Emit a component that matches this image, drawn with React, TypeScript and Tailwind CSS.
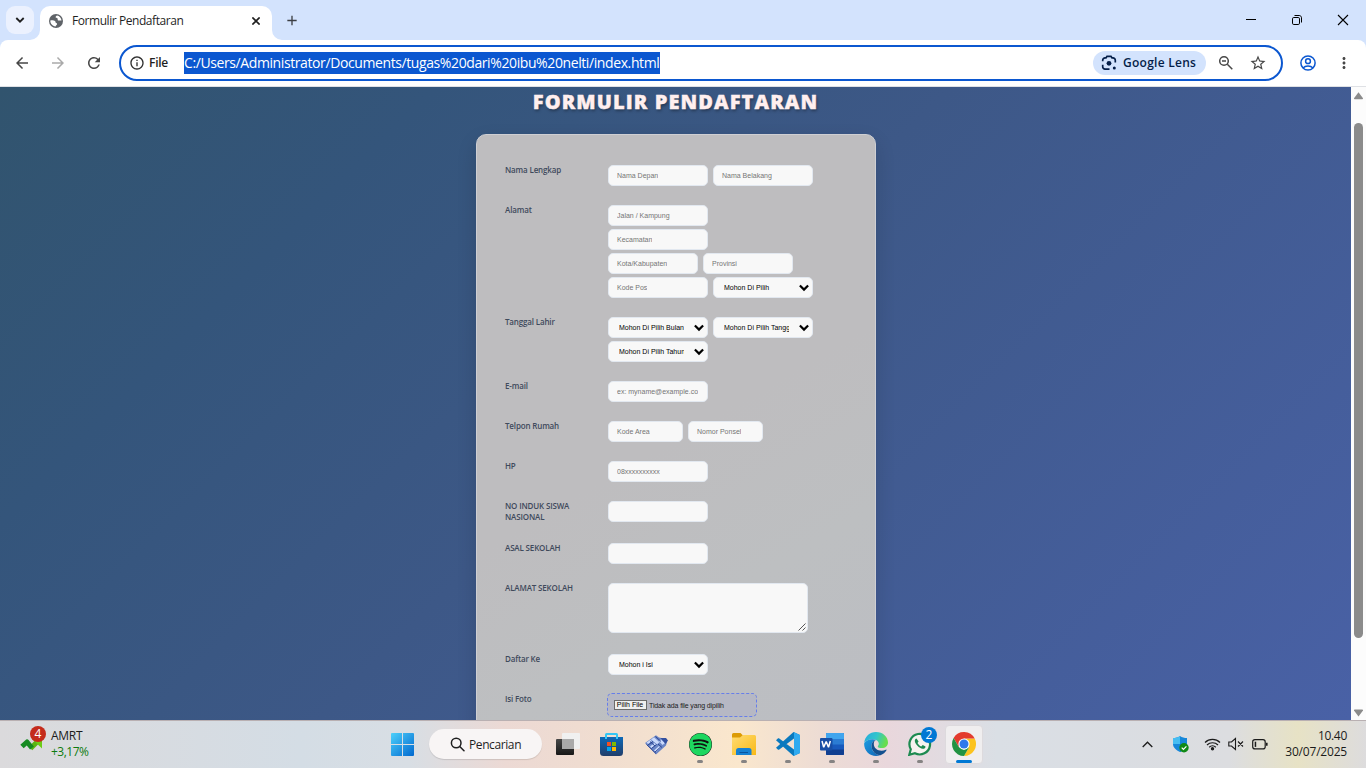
import React from "react";
import {
  MdArrowBack,
  MdArrowForward,
  MdRefresh,
  MdInfoOutline,
  MdStarBorder,
  MdMoreVert,
  MdAdd,
} from "react-icons/md";
import { FaSpotify } from "react-icons/fa";

function TabStrip() {
  return (
    <div className="flex h-10 shrink-0 bg-[#d3e3fd]">
      <div className="ml-1.5 mt-1.5 flex h-7 w-7 items-center justify-center rounded-[9px] bg-[#ebf1fe]">
        <svg width="10" height="10" viewBox="0 0 10 10" fill="none" stroke="#1f1f1f" strokeWidth="1.8">
          <path d="M1.3 3l3.7 3.7L8.7 3" />
        </svg>
      </div>
      <div className="relative ml-1.5 mt-1.5 flex h-[34px] w-[232px] items-center rounded-t-[10px] bg-white pb-[5px] pl-[9px] pr-[12px]">
        <svg className="absolute -left-2.5 bottom-0" width="10" height="10" viewBox="0 0 10 10">
          <path d="M10 0v10H0A10 10 0 0 0 10 0z" fill="#fff" />
        </svg>
        <svg className="absolute -right-2.5 bottom-0" width="10" height="10" viewBox="0 0 10 10">
          <path d="M0 0v10h10A10 10 0 0 1 0 0z" fill="#fff" />
        </svg>
        <svg width="14" height="14" viewBox="0 0 14 14">
          <circle cx="7" cy="7" r="7" fill="#5f6368" />
          <path d="M1.300 6.600C3 6.200 5 6.200 6 7c.8.600.2 1.200.8 1.700.7.500 1.500.6 1.300 1.500-.2 1-1.300.8-1.500 2.300C3.500 12.300 1.300 9.800 1.300 6.600z" fill="#fff" />
          <path d="M8 1.400C6.800 2 6.300 3 6.900 3.700c.6.600 1.300.1 1.700.8.400.8-.3 1.400.5 1.900 1 .5 1.700-.3 3.400.1C12.300 4 10.500 1.800 8 1.400z" fill="#fff" />
        </svg>
        <span className="ml-[9px] flex-1 whitespace-nowrap text-[12px] leading-4 tracking-[-0.44px] text-[#1f1f1f]">
          Formulir Pendaftaran
        </span>
        <svg width="8" height="8" viewBox="0 0 8 8" stroke="#1f1f1f" strokeWidth="1.600">
          <path d="M.4.4l7.200 7.200M7.600.4L.4 7.600" />
        </svg>
      </div>
      <div className="ml-[12px] flex h-10 w-4 items-center justify-center">
        <MdAdd size={17} color="#3c3f44" />
      </div>
      <div className="ml-auto flex h-10 items-center">
        <svg className="mr-[34px]" width="12" height="12" viewBox="0 0 12 12">
          <path d="M1 5.500h10" stroke="#000" />
        </svg>
        <svg className="mr-[34px]" width="12" height="12" viewBox="0 0 12 12" fill="none" stroke="#000">
          <rect x="1.500" y="3.500" width="7" height="7" rx="1.300" />
          <path d="M3.500 1.500h4.700c1.300 0 2.300 1 2.300 2.300v4.700" />
        </svg>
        <svg className="mr-[17px]" width="12" height="12" viewBox="0 0 12 12" stroke="#000" strokeWidth="1.100">
          <path d="M1 1l10 10M11 1L1 11" />
        </svg>
      </div>
    </div>
  );
}

function Toolbar() {
  return (
    <div className="h-[47px] shrink-0 bg-[#d3e3fd]">
      <div className="flex h-[47px] items-center rounded-t-[8px] border-b border-[#dfe1e5] bg-white">
        <MdArrowBack className="ml-[13px]" size={18} color="#474747" />
        <MdArrowForward className="ml-[18px]" size={18} color="#aaaaaa" />
        <MdRefresh className="ml-[18px]" size={18} color="#474747" />
        <div className="ml-4 flex h-9 w-[1164px] items-center rounded-full border-2 border-[#0b57d0] pl-2">
          <MdInfoOutline size={16} color="#303030" />
          <span className="ml-[4px] w-[35px] text-[12px] font-semibold leading-4 tracking-[-0.25px] text-[#1f1f1f]">File</span>
          <span className="w-[476px] whitespace-nowrap bg-[#0b57d0] text-[14px] leading-[22px] tracking-[-0.4px] text-white">
            C:/Users/Administrator/Documents/tugas%20dari%20ibu%20nelti/index.html
          </span>
          <div className="ml-auto flex h-6 w-[113px] items-center rounded-full bg-[#d3e3fd] pl-2">
            <svg width="16" height="16" viewBox="0 0 16 16" fill="none" stroke="#041e49" strokeWidth="1.700">
              <path d="M1.700 6.300V5.200A2.300 2.300 0 0 1 4 2.900h1l1-1.600h4l1 1.600h1a2.300 2.300 0 0 1 2.300 2.300v2.300M1.700 9.700v2.100A2.300 2.300 0 0 0 4 14.100h4.500" />
              <circle cx="8" cy="8.300" r="2.400" fill="#041e49" stroke="none" />
              <circle cx="13.300" cy="13" r="1.500" fill="#041e49" stroke="none" />
            </svg>
            <span className="ml-[6px] whitespace-nowrap text-[12px] font-semibold leading-4 tracking-[0.26px] text-[#041e49]">
              Google Lens
            </span>
          </div>
          <svg className="ml-[12px]" width="16" height="16" viewBox="0 0 16 16" fill="none" stroke="#474747" strokeWidth="1.500">
            <circle cx="6" cy="6" r="4.300" />
            <path d="M9.300 9.300l5 5M4 6h4" />
          </svg>
          <MdStarBorder className="ml-[15px] mr-[14px]" size={18} color="#474747" />
        </div>
        <svg className="ml-[17px]" width="16" height="16" viewBox="0 0 16 16" fill="none" stroke="#0b57d0" strokeWidth="1.500">
          <circle cx="8" cy="8" r="7.100" />
          <circle cx="8" cy="6.200" r="2.400" />
          <path d="M3 13c2.500-2.600 7.500-2.600 10 0" />
        </svg>
        <MdMoreVert className="ml-[19px]" size={18} color="#474747" />
      </div>
    </div>
  );
}

function Label({ children }: { children: React.ReactNode }) {
  return (
    <div className="w-[103px] shrink-0 whitespace-pre pl-[0.5px] text-[8px] font-semibold leading-[11px] tracking-[-0.16px] text-[#3f4a5c]">
      {children}
    </div>
  );
}

function Field({ text = "", width = "w-[100px]" }: { text?: string; width?: string }) {
  return (
    <div className={`flex h-[21px] items-center rounded-[5px] border border-[#e2e8f0] bg-[#f8f8f8] pl-[8.500px] pr-1.5 ${width}`}>
      <span className="overflow-hidden whitespace-nowrap font-['Liberation_Sans'] text-[7px] leading-[9px] text-[#757575]">
        {text}
      </span>
    </div>
  );
}

function Choice({ text }: { text: string }) {
  return (
    <div className="flex h-[21px] w-[100px] items-center rounded-[5px] border border-[#e2e8f0] bg-[#f8f8f8] pl-[10.500px] pr-[3px]">
      <span className="w-[65px] overflow-hidden whitespace-nowrap font-['Liberation_Sans'] text-[7px] leading-[9px] text-black">
        {text}
      </span>
      <svg className="ml-auto" width="10" height="8" viewBox="0 0 10 8" fill="none" stroke="#000" strokeWidth="2.200">
        <path d="M.9 1.500L5 5.600l4.100-4.100" />
      </svg>
    </div>
  );
}

function Row({ label, children, className = "mb-[18px]" }: { label: React.ReactNode; children: React.ReactNode; className?: string }) {
  return (
    <div className={`flex items-start ${className}`}>
      <Label>{label}</Label>
      <div className="flex flex-col gap-[3px] pt-px">{children}</div>
    </div>
  );
}

function Page() {
  return (
    <div className="flex h-[633px] shrink-0 overflow-hidden">
      <main className="flex flex-1 flex-col items-center overflow-hidden bg-[linear-gradient(135deg,#31546e_0%,#34557b_22%,#3d5887_48%,#4961a6_100%)]">
        <h1 className="mt-1 h-[22px] whitespace-nowrap text-[20px] font-extrabold leading-[22px] tracking-[1.1px] text-[#ffefef] [-webkit-text-stroke:0.4px_#ffefef] [text-shadow:1px_2px_3px_rgba(0,0,0,0.35)]">
          FORMULIR PENDAFTARAN
        </h1>
        <div className="mt-[21px] h-[700px] w-[400px] shrink-0 rounded-[10px] border border-[#cfcfd3] bg-[linear-gradient(150deg,#bebdbf_0%,#bebdbf_45%,#bdbfc1_65%,#bbbdc4_100%)] pl-7 pt-[29px] shadow-[0_8px_20px_rgba(0,0,0,0.14)]">
          <Row label="Nama Lengkap">
            <div className="flex gap-[5px]">
              <Field text="Nama Depan" />
              <Field text="Nama Belakang" />
            </div>
          </Row>
          <Row label="Alamat">
            <Field text="Jalan / Kampung" />
            <Field text="Kecamatan" />
            <div className="flex gap-[5px]">
              <Field text="Kota/Kabupaten" width="w-[90px]" />
              <Field text="Provinsi" width="w-[90px]" />
            </div>
            <div className="flex gap-[5px]">
              <Field text="Kode Pos" />
              <Choice text="Mohon Di Pilih" />
            </div>
          </Row>
          <Row label="Tanggal Lahir">
            <div className="flex gap-[5px]">
              <Choice text="Mohon Di Pilih Bulan" />
              <Choice text="Mohon Di Pilih Tangg" />
            </div>
            <Choice text="Mohon Di Pilih Tahun" />
          </Row>
          <Row label="E-mail">
            <Field text="ex: myname@example.co" />
          </Row>
          <Row label="Telpon Rumah">
            <div className="flex gap-[5px]">
              <Field text="Kode Area" width="w-[75px]" />
              <Field text="Nomor Ponsel" width="w-[75px]" />
            </div>
          </Row>
          <Row label="HP">
            <Field text="08xxxxxxxxxx" />
          </Row>
          <Row label={"NO INDUK SISWA\nNASIONAL"} className="mb-5">
            <Field />
          </Row>
          <Row label="ASAL SEKOLAH">
            <Field />
          </Row>
          <Row label="ALAMAT SEKOLAH" className="mb-5">
            <div className="flex h-[50px] w-[200px] items-end justify-end rounded-[5px] border border-[#e2e8f0] bg-[#f8f8f8] p-px">
              <svg width="8" height="8" viewBox="0 0 8 8" stroke="#444" strokeWidth="0.900">
                <path d="M.5 7.500l7-7M4.500 7.500l3-3" />
              </svg>
            </div>
          </Row>
          <Row label="Daftar Ke">
            <Choice text="Mohon i Isi" />
          </Row>
          <div className="flex items-start">
            <Label>Isi Foto</Label>
            <div className="-ml-px flex h-6 w-[150px] items-center rounded-[5px] border border-dashed border-[#667eea] bg-[#b6b8c4] pl-1.5">
              <span className="flex h-[10px] w-[33px] items-center justify-center whitespace-nowrap border border-[#6b6b6b] bg-[#efefef] font-['Liberation_Sans'] text-[7px] leading-[8px] text-black">
                Pilih File
              </span>
              <span className="ml-[2.500px] whitespace-nowrap font-['Liberation_Sans'] text-[7px] leading-[9px] tracking-[-0.13px] text-[#1c1c1c]">
                Tidak ada file yang dipilih
              </span>
            </div>
          </div>
        </div>
      </main>
      <div className="flex w-[15px] flex-col items-center bg-[#fcfcfc]">
        <svg className="mt-[5px]" width="9" height="8" viewBox="0 0 9 8">
          <path d="M4.500 0.300L9 6.300c0 .7-.5 1-1 1H1c-.6 0-1-.3-1-1z" fill="#8b8b8b" />
        </svg>
        <div className="mt-[23px] h-[515px] w-[9px] rounded-full bg-[#8b8b8b]" />
        <svg className="mt-[71px]" width="9" height="8" viewBox="0 0 9 8">
          <path d="M4.500 7.500L9 1.500c0-.7-.5-1-1-1H1c-.6 0-1 .3-1 1z" fill="#8b8b8b" />
        </svg>
      </div>
    </div>
  );
}

function TaskbarApp({ children, className = "" }: { children: React.ReactNode; className?: string }) {
  return (
    <div className={`flex w-11 flex-col items-center ${className}`}>
      <div className="flex h-6 items-center">{children}</div>
      <div className="mt-[4px] h-[3px] w-[6px] rounded-full bg-[#858383]" />
    </div>
  );
}

function Taskbar() {
  return (
    <div className="flex h-12 shrink-0 items-start border-t border-[#b9b0b2] bg-[linear-gradient(90deg,#dbdadc_0%,#d4dde5_22%,#d8dee4_30%,#ecd9d4_37%,#f0ddd0_44%,#fae7cd_54%,#eddcd4_60%,#e9d7dc_65%,#dadfe5_73%,#dadde2_82%,#dcdde0_90%,#e7e2c5_95%,#dddcdd_100%)]">
      <div className="flex w-[386px] pl-5 pt-[5px]">
        <div className="relative h-9 w-[26px]">
          <svg className="absolute left-0 top-[12px]" width="23" height="14" viewBox="0 0 23 14" fill="none" strokeWidth="5">
            <path d="M10.500 10.500l7-7" stroke="#59b512" />
            <path d="M12 1h10v9.500z" fill="#6ccb16" />
            <path d="M2 8.500L7 4l5 6" stroke="#168a22" strokeLinejoin="round" />
          </svg>
          <div className="absolute left-[10px] top-0 flex h-4 w-4 items-center justify-center rounded-full bg-[#c42b1c] text-[12px] leading-4 text-white">4</div>
        </div>
        <div className="ml-[5px] whitespace-nowrap pt-0.5 text-[12px] leading-4">
          <div className="tracking-[-0.3px] text-[#1b1b1b]">AMRT</div>
          <div className="tracking-[-0.5px] text-[#0f7b0f]">+3,17%</div>
        </div>
      </div>
      <svg className="ml-[5px] mt-[12px]" width="23" height="23" viewBox="0 0 23 23">
        <defs>
          <linearGradient id="win" x1="0" y1="0" x2="1" y2="1">
            <stop offset="0" stopColor="#4dd0fb" />
            <stop offset="1" stopColor="#0068cf" />
          </linearGradient>
        </defs>
        <path d="M1 0h10v11H0V1a1 1 0 0 1 1-1zM12 0h10a1 1 0 0 1 1 1v10H12zM0 12h11v11H1a1 1 0 0 1-1-1zM12 12h11v10a1 1 0 0 1-1 1H12z" fill="url(#win)" />
      </svg>
      <div className="ml-[15px] mt-2 flex h-[30px] w-[113px] items-center rounded-full bg-[#f8f5f5] pl-[20.500px] shadow-[0_1px_1px_rgba(0,0,0,0.12)]">
        <svg width="15" height="15" viewBox="0 0 15 15" fill="none" stroke="#1f1f1f" strokeWidth="1.500">
          <circle cx="6.200" cy="6" r="4.800" />
          <path d="M9.700 9.500l4.300 4.300" strokeLinecap="round" />
        </svg>
        <span className="ml-[4.500px] whitespace-nowrap pt-px text-[12px] leading-4 tracking-[-0.4px] text-[#1f1f1f]">Pencarian</span>
      </div>
      <svg className="ml-[14px] mt-[12px]" width="24" height="23" viewBox="0 0 24 23">
        <defs>
          <linearGradient id="tv" x1="0" y1="0" x2="0" y2="1">
            <stop offset="0" stopColor="#474747" />
            <stop offset="1" stopColor="#171717" />
          </linearGradient>
        </defs>
        <rect x="0" y="6" width="18" height="16" rx="1" fill="url(#tv)" />
        <rect x="6" y="0" width="18" height="16" rx="1" fill="#f0f0f0" />
        <rect x="6" y="6" width="12" height="10" fill="#aaa" />
      </svg>
      <svg className="ml-5 mt-[12px]" width="23" height="23" viewBox="0 0 23 23">
        <defs>
          <linearGradient id="st" x1="0" y1="0" x2="0" y2="1">
            <stop offset="0" stopColor="#0d69b8" />
            <stop offset="1" stopColor="#213d69" />
          </linearGradient>
        </defs>
        <path d="M0 4h23v15.500a3.500 3.500 0 0 1-3.500 3.500h-16A3.500 3.500 0 0 1 0 19.500z" fill="url(#st)" />
        <path d="M6 6V1.500A.5.5 0 0 1 6.500 1h10a.5.5 0 0 1 .5.500V6" fill="none" stroke="#35c6f4" strokeWidth="2" />
        <rect x="7" y="9" width="4" height="4" fill="#f25022" />
        <rect x="12" y="9" width="4" height="4" fill="#7fba00" />
        <rect x="7" y="14" width="4" height="4" fill="#00a4ef" />
        <rect x="12" y="14" width="4" height="4" fill="#ffb900" />
      </svg>
      <svg className="ml-[22px] mt-[14px]" width="23" height="20" viewBox="0 0 23 20">
        <path d="M0 8L11 .3l3 2.200L16.500 3 22 7l-1 3.500L11 19.500z" fill="#6b86c6" />
        <path d="M1.500 7.500l4-2.700 1.500 1.500-4 2.700zM6 4.500l3-2.200 5.500 5-2.500 2zM5 11.500l4.500-3.500 1.500 1.500L6.500 13zM9 15.500l5-4.500 1.500 1.500-4.700 4.500zM14 6l3.500 4 2.500-2-4-3.500z" fill="#cbdafc" />
        <path d="M1.500 9.500l9.500 9M10.500 1.500l5.500 5M5 6.500l5 4.500M3 10l5-3.500M6.500 13.500l5-4M10 17l5.500-5M13 9l4 3.500" stroke="#263f8e" strokeWidth=".9" fill="none" />
        <path d="M15.500 3h5.500l2 2.500-2.500 3.500-2-2.500z" fill="#34509f" />
      </svg>
      <div className="ml-[10px] flex pt-[11px]">
        <TaskbarApp>
          <div className="rounded-full bg-[#101010]">
            <FaSpotify size={23} color="#1ed760" />
          </div>
        </TaskbarApp>
        <TaskbarApp>
          <svg width="24" height="22" viewBox="0 0 24 22">
            <defs>
              <linearGradient id="fo" x1="0" y1="0" x2="1" y2="1">
                <stop offset="0" stopColor="#ffdc73" />
                <stop offset="1" stopColor="#f9b916" />
              </linearGradient>
            </defs>
            <path d="M0 1.500A1.500 1.500 0 0 1 1.500 0h7L11 2.500l-2 3H0z" fill="#dc9b06" />
            <path d="M0 4.500h8L11 2h11.500A1.500 1.500 0 0 1 24 3.500V22H0z" fill="url(#fo)" />
            <path d="M4 22v-4.500A2.500 2.500 0 0 1 6.500 15h10.500a2.500 2.500 0 0 1 2.500 2.500V22z" fill="#1681d2" />
            <path d="M7.500 19.500h8.500" stroke="#0a559f" />
          </svg>
        </TaskbarApp>
        <TaskbarApp>
          <svg width="24" height="24" viewBox="0 0 24 24">
            <path d="M17.500 0L24 3v18l-6.500 3L0 8.300 1.800 6.500c.5-.4 1-.3 1.500 0L18 17.500V6.500L3.300 17.500c-.5.4-1 .3-1.500 0L0 15.800z" fill="#0a79be" />
            <path d="M17.500 0L24 3v18l-6.500 3c.4-.5.5-1 .5-1.500v-21c0-.5-.1-1-.5-1.500z" fill="#2faaf0" />
          </svg>
        </TaskbarApp>
        <TaskbarApp>
          <svg width="24" height="22" viewBox="0 0 24 22">
            <rect x="6" y="0" width="18" height="22" rx="1" fill="#185abd" />
            <path d="M7 0h16a1 1 0 0 1 1 1v5H6V1a1 1 0 0 1 1-1z" fill="#41a5ee" />
            <path d="M6 6h18v5.500H6z" fill="#2b7cd3" />
            <path d="M6 16.500h18V21a1 1 0 0 1-1 1H7a1 1 0 0 1-1-1z" fill="#103f91" />
            <rect x="0" y="5" width="12.500" height="12.500" rx="1" fill="#174ea5" />
            <path d="M2 8l1.700 6.300L6.200 8.500l2.300 5.800L10.300 8" fill="none" stroke="#fff" strokeWidth="1.500" strokeLinejoin="bevel" />
          </svg>
        </TaskbarApp>
        <TaskbarApp>
          <svg width="24" height="24" viewBox="0 0 24 24">
            <defs>
              <linearGradient id="ed" x1="0" y1="0" x2="1" y2=".3">
                <stop offset="0" stopColor="#28a9de" />
                <stop offset=".55" stopColor="#31c5cc" />
                <stop offset="1" stopColor="#68dd4e" />
              </linearGradient>
              <linearGradient id="ed2" x1="0" y1="0" x2="1" y2="1">
                <stop offset="0" stopColor="#1b9de2" />
                <stop offset="1" stopColor="#1264b5" />
              </linearGradient>
            </defs>
            <path d="M.2 11C.8 4.500 5.700 0 12 0c7 0 12 5 12 10.500 0 3.500-2.600 5.600-6 5.600-2.600 0-4.200-.8-4.200-1.700 0-.7 1-1 1-2.700 0-2.700-2.800-4.500-6.300-4.500C4.500 7.200 1.500 9 .2 11z" fill="url(#ed)" />
            <path d="M.1 11.500C1.300 9 4.500 7.300 8.500 7.200c1.500 0 2.700.2 3.800.8C9 8.500 7.500 11 7.500 14c0 5 4 8.500 8.500 9.300-1.200.5-2.600.7-4 .7C5.400 24 0 18.600.1 11.500z" fill="url(#ed2)" />
            <path d="M11.500 8C8.500 9 7.500 11.500 7.500 14c0 5.500 5 9.300 9 9.200 2.700-1 4.800-2.700 6-5 .2-.5-.2-.8-.7-.5-5.500 2.700-12-.3-12-5.700 0-1.800.7-3.200 1.700-4z" fill="#13508f" />
          </svg>
        </TaskbarApp>
        <TaskbarApp className="relative">
          <svg width="24" height="24" viewBox="0 0 24 24" fill="none">
            <path d="M1.300 22.800l1.500-5.600A10.300 10.300 0 1 1 6.900 21.200z" fill="#f5f3f0" stroke="#1c8a50" strokeWidth="2.200" />
            <path d="M8.500 6.500c-.9 0-1.700 1-1.700 2.300 0 2.900 4.500 7.800 8 8 1.700 0 2.800-1 2.700-2.400l-2.800-1.400-1.400 1.400c-1.800-.7-3-1.900-3.800-3.500l1.100-1.300z" fill="#1c8a50" />
          </svg>
          <div className="absolute -top-[5px] left-[23px] flex h-4 w-4 items-center justify-center rounded-full bg-[#0078d4] text-[12px] leading-4 text-white">2</div>
        </TaskbarApp>
      </div>
      <div className="ml-[3px] mt-1 flex h-[39px] w-[38px] flex-col items-center rounded-[4px] border border-[#dddadd] bg-[#f0eeef] pt-[6px]">
        <svg width="24" height="24" viewBox="0 0 24 24">
          <path d="M12 6.500h10.700A12 12 0 0 1 12 24l5.200-9z" fill="#fcc31e" />
          <path d="M1.610 6A12 12 0 0 1 22.700 6.600H12L6.800 15z" fill="#e33b2e" />
          <path d="M1.610 6L6.800 15l5.200 3 5.200-3L12 24A12 12 0 0 1 1.610 6z" fill="#229342" />
          <circle cx="12" cy="12" r="5.600" fill="#fff" />
          <circle cx="12" cy="12" r="4.500" fill="#2f78ec" />
        </svg>
        <div className="mt-[4px] h-[3px] w-4 shrink-0 rounded-full bg-[#0078d4]" />
      </div>
      <div className="ml-auto flex pr-[19px]">
        <svg className="mr-[20px] mt-[20px]" width="11" height="7" viewBox="0 0 11 7" fill="none" stroke="#1b1b1b" strokeWidth="1.300">
          <path d="M.7 6l4.800-4.800L10.300 6" />
        </svg>
        <svg className="mr-[15px] mt-[15px]" width="16" height="17" viewBox="0 0 16 17">
          <path d="M7 0c2 1.500 4.500 2 7 2v6c0 3.500-3 6-7 8-4-2-7-4.500-7-8V2c2.500 0 5-.5 7-2z" fill="#1687d9" />
          <path d="M7 0v8H0V2c2.500 0 5-.5 7-2z" fill="#46bdf1" />
          <path d="M7 8h7c0 3.500-3 6-7 8z" fill="#1474c4" />
          <circle cx="11" cy="11.700" r="4.700" fill="#0f8a16" />
          <path d="M8.700 11.700l1.700 1.700 3-3" fill="none" stroke="#fff" strokeWidth="1.200" />
        </svg>
        <svg className="mr-[7px] mt-[16px]" width="17" height="14" viewBox="0 0 17 14" fill="none" stroke="#1b1b1b" strokeWidth="1.200">
          <path d="M1 5.500a10.600 10.600 0 0 1 15 0M3 8a7.800 7.800 0 0 1 11 0M5.200 10.200a4.700 4.700 0 0 1 6.600 0" />
          <circle cx="8.500" cy="11.800" r="1.100" fill="#1b1b1b" />
        </svg>
        <svg className="mr-[8px] mt-[16px]" width="16" height="14" viewBox="0 0 16 14" fill="none" stroke="#1b1b1b" strokeWidth="1.100">
          <path d="M.8 5h2.700L7.500 1.500v11L3.500 9H.8zM10 4.500l5 5M15 4.500l-5 5" />
        </svg>
        <svg className="mt-[18px]" width="16" height="11" viewBox="0 0 16 11" fill="none" stroke="#1b1b1b" strokeWidth="1.200">
          <rect x=".7" y=".7" width="12.500" height="9.200" rx="2.200" />
          <rect x="2.700" y="2.700" width="1.500" height="5.200" fill="#1b1b1b" stroke="none" />
          <path d="M14.800 3.800v3" strokeWidth="1.600" />
        </svg>
        <div className="w-[79px] whitespace-nowrap pt-[7px] text-right text-[12px] leading-4 text-[#1b1b1b]">
          <div className="tracking-[-0.3px]">10.40</div>
          <div className="tracking-[-0.2px]">30/07/2025</div>
        </div>
      </div>
    </div>
  );
}

export default function App() {
  return (
    <div className="flex h-[768px] w-[1366px] flex-col overflow-hidden font-['Open_Sans','Noto_Sans',sans-serif]">
      <TabStrip />
      <Toolbar />
      <Page />
      <Taskbar />
    </div>
  );
}
